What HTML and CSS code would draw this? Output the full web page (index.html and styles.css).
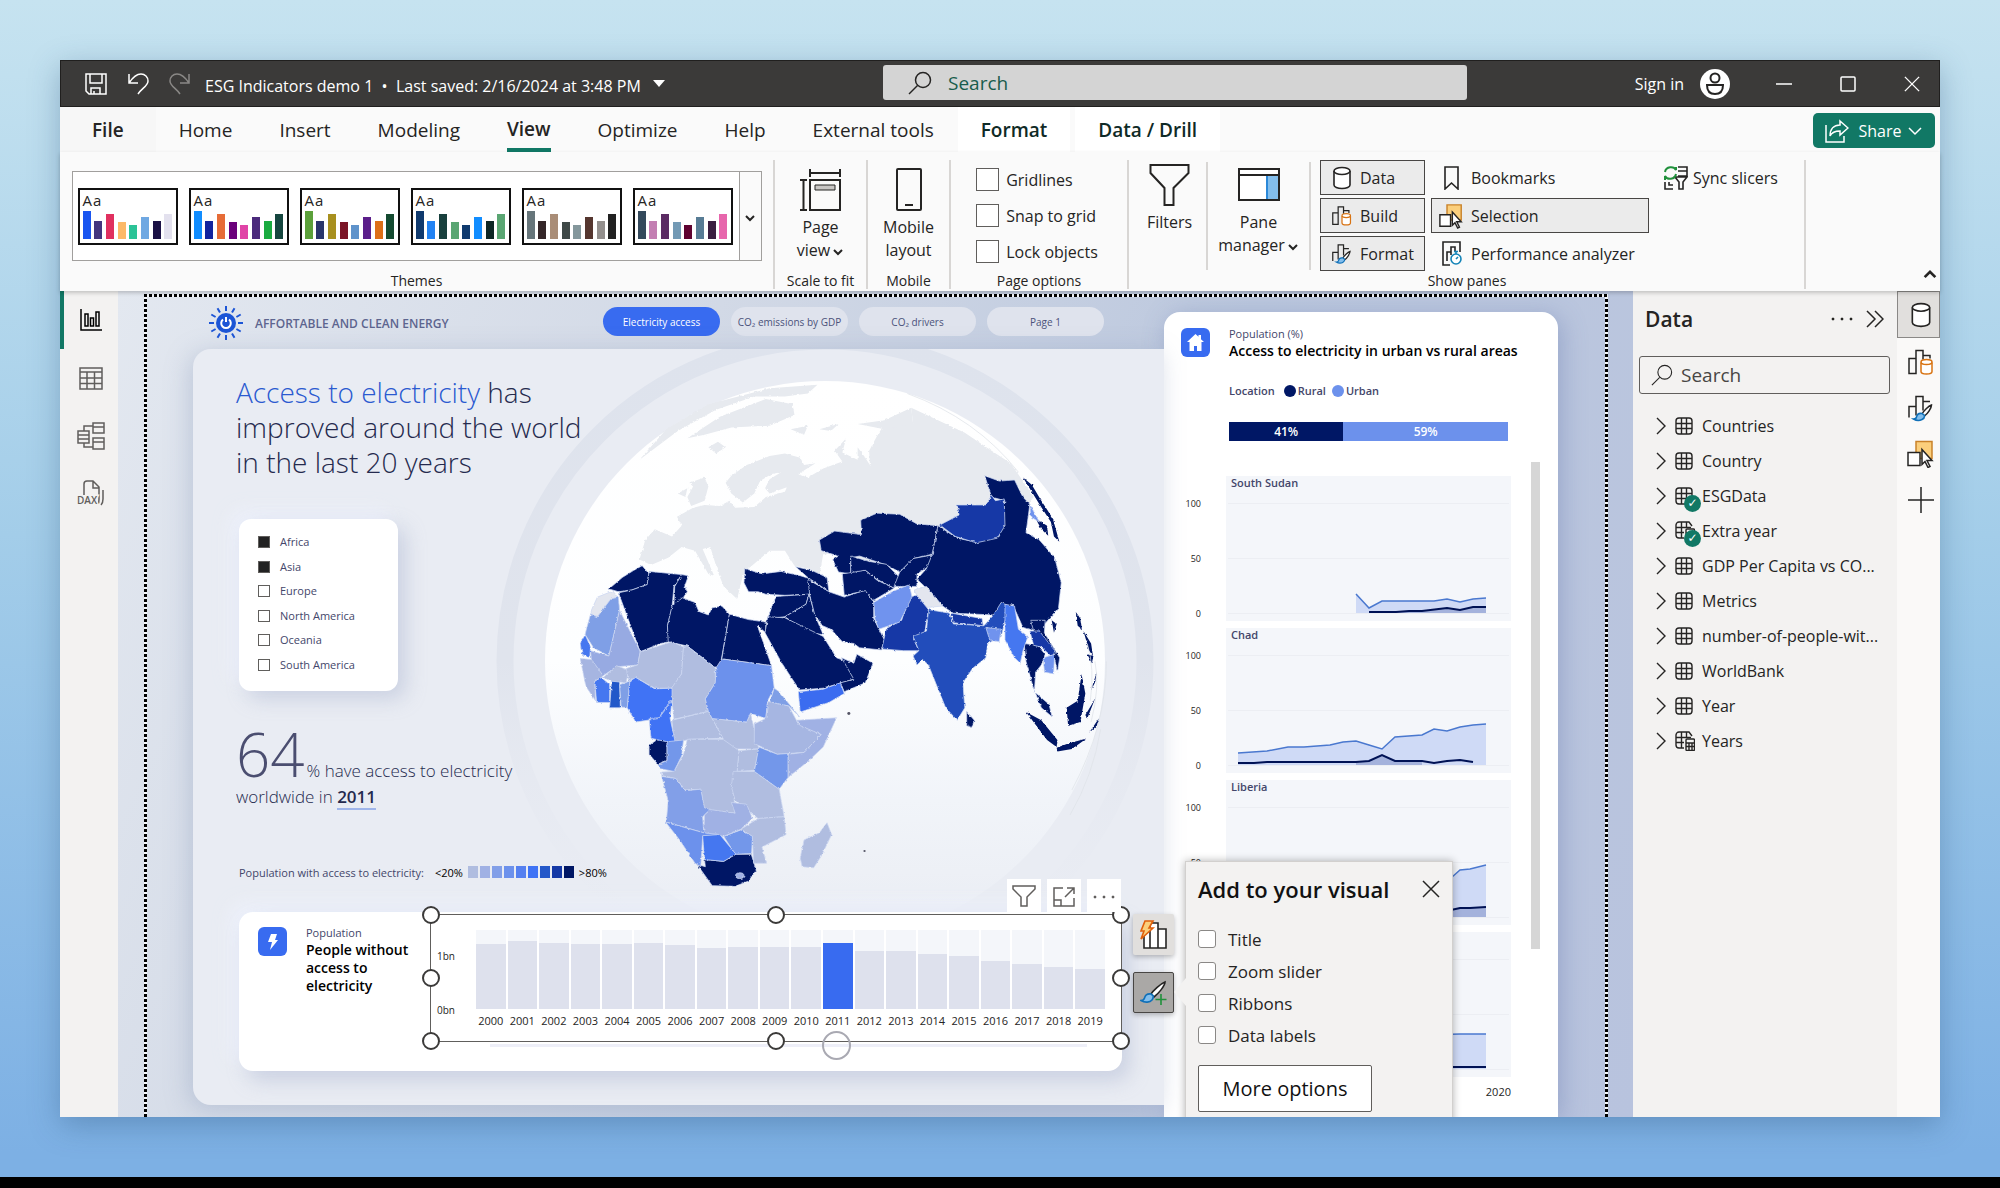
FILE: index.html
```html
<!doctype html>
<html lang="en">
  <head>
    <meta charset="UTF-8" />
    <meta name="viewport" content="width=device-width, initial-scale=1.0" />
    <title>ESG Indicators demo 1</title>
    <link rel="stylesheet" href="styles.css">
  </head>
  <body>
    <!-- Shared icons -->
    <svg class="sprite" aria-hidden="true">
      <symbol id="i-search" viewBox="0 0 24 24"><circle cx="15" cy="9" r="7.5" /><path d="M9.5 14.5 1 23" /></symbol>
      <symbol id="i-cylinder" viewBox="0 0 20 24"><path d="M2 5v14c0 2 3.500 3.500 8 3.500s8-1.500 8-3.500V5" fill="#fff" /><ellipse cx="10" cy="5" rx="8" ry="3.500" fill="#fff" /></symbol>
      <symbol id="i-build" viewBox="0 0 26 26"><path d="M1 9h7v15H1zM8 24V1h7v9M15 6h7v3" /><path class="orange" d="M13 13v9c0 1.300 2 2.500 5.500 2.500S24 23.300 24 22v-9" /><ellipse class="orange" cx="18.500" cy="12.500" rx="5.500" ry="2.500" /></symbol>
      <symbol id="i-format" viewBox="0 0 26 26"><path d="M1 22V11h7M8 20V1h7v14M15 6h7" /><path d="M23.500 9.500c-3 1-8 6-9.500 9l2.500 2c3-2 7-8 7-11z" fill="#fff" /><path class="blue" d="M14 18c-3-.5-5 1-5.500 3.500-.3 1.500-1.500 2-3 2 2.500 1.500 6 1.800 8.500.5 2-1 2.700-2.700 2.500-4z" /></symbol>
      <symbol id="i-selection" viewBox="0 0 27 27"><path d="M9 1h16v17H9z" fill="#fbcf7c" stroke="#c9822a" /><path d="M1 12h12v13H1z" fill="#fff" /><path d="m15 9 10 11h-5l3 6-2 1-3-6-3 3z" fill="#fff" /></symbol>
      <symbol id="i-chevron" viewBox="0 0 12 8"><path d="m2 2 4 4 4-4" /></symbol>
      <symbol id="i-right" viewBox="0 0 10 18"><path d="m1 1 8 8-8 8" /></symbol>
      <symbol id="i-table" viewBox="0 0 18 18"><rect x="1" y="1" width="16" height="16" rx="3" /><path d="M6.500 1v16M11.500 1v16M1 6.500h16M1 11.500h16" /></symbol>
      <symbol id="i-calc" viewBox="0 0 20 20"><path d="M9 17H4a3 3 0 0 1-3-3V4a3 3 0 0 1 3-3h10l3 4M6.500 1v16M11.500 1v6M1 6.500h15M1 11.500h8" /><rect x="11" y="8" width="8.500" height="11.500" rx="1" /><path d="M11 12h8M11 15.500h8M14 12v7M17 12v7" /></symbol>
      <symbol id="i-funnel" viewBox="0 0 40 42"><path d="M1 1h38v8L24 24v17h-9V24L1 9z" /></symbol>
      <symbol id="i-close" viewBox="0 0 18 18"><path d="m1 1 16 16M17 1 1 17" /></symbol>
      <symbol id="i-dots" viewBox="0 0 22 4"><path d="M1 1h2v2H1zM10 1h2v2h-2zM19 1h2v2h-2z" fill="currentColor" stroke-width=".5" /></symbol>
    </svg>

    <div class="app">
      <header class="titlebar">
        <button class="tb-btn" aria-label="Save"><svg width="22" height="22" viewBox="0 0 22 22"><path d="M1 1h20v20H4l-3-3zM5 1v9h12V1M6 21v-6h9v6M9 21v-3" /></svg></button>
        <button class="tb-btn" aria-label="Undo"><svg width="22" height="22" viewBox="0 0 22 22"><path d="M2 1v9h9M2 10C6 4 10 1 14 1c4 0 7 3 7 7 0 5-6 7-10 13" /></svg></button>
        <button class="tb-btn tb-off" aria-label="Redo"><svg width="22" height="22" viewBox="0 0 22 22"><path d="M20 1v9h-9M20 10C16 4 12 1 8 1 4 1 1 4 1 8c0 5 6 7 10 13" /></svg></button>
        <button class="doc-name">ESG Indicators demo 1 &nbsp;•&nbsp; Last saved: 2/16/2024 at 3:48 PM <span class="caret"></span></button>
        <label class="top-search"><svg width="24" height="24"><use href="#i-search" /></svg><input type="text" placeholder="Search" aria-label="Search"></label>
        <div class="account">
          <span>Sign in</span>
          <svg class="avatar" width="30" height="30" viewBox="0 0 30 30"><circle cx="15" cy="15" r="15" fill="#fff" stroke="none" /><circle cx="15" cy="9" r="4.500" /><path d="M7 16h16c0 6-3 9-8 9s-8-3-8-9z" /></svg>
          <button class="win-btn" aria-label="Minimize"><svg width="16" height="16" viewBox="0 0 16 16"><path d="M0 8h16" /></svg></button>
          <button class="win-btn" aria-label="Maximize"><svg width="16" height="16" viewBox="0 0 16 16"><rect x="1" y="1" width="14" height="14" rx="1" /></svg></button>
          <button class="win-btn" aria-label="Close"><svg width="16" height="16"><use href="#i-close" /></svg></button>
        </div>
      </header>

      <nav class="tabs">
        <button class="tab tab-file">File</button>
        <button class="tab">Home</button>
        <button class="tab">Insert</button>
        <button class="tab">Modeling</button>
        <button class="tab tab-active"><span>View</span></button>
        <button class="tab">Optimize</button>
        <button class="tab">Help</button>
        <button class="tab">External tools</button>
        <button class="tab tab-context">Format</button>
        <button class="tab tab-context">Data / Drill</button>
        <button class="share"><svg width="24" height="24" viewBox="0 0 24 24"><path d="M1 6v17h18v-6M15 2l8 7-8 7v-4c-5 0-8 1-10 5 0-7 4-11 10-11z" /></svg>Share<svg width="18" height="12"><use href="#i-chevron" /></svg></button>
      </nav>

      <div class="ribbon">
        <section class="group group-themes">
          <div class="gallery">
            <button class="theme">Aa<span class="swatches"><i style="background:#1a55f0"></i><i style="background:#43357e"></i><i style="background:#e0305f"></i><i style="background:#fcb968"></i><i style="background:#2cc397"></i><i style="background:#6fa8e2"></i><i style="background:#1b1145"></i><i style="background:#e3e1ee"></i></span></button>
            <button class="theme">Aa<span class="swatches"><i style="background:#118dff"></i><i style="background:#12239e"></i><i style="background:#e66c37"></i><i style="background:#6b007b"></i><i style="background:#e044a7"></i><i style="background:#4b2a7c"></i><i style="background:#1aab40"></i><i style="background:#15463f"></i></span></button>
            <button class="theme">Aa<span class="swatches"><i style="background:#5ba03a"></i><i style="background:#29356b"></i><i style="background:#a8901f"></i><i style="background:#7a1426"></i><i style="background:#5f93cb"></i><i style="background:#5b1e8a"></i><i style="background:#dd6f17"></i><i style="background:#144a30"></i></span></button>
            <button class="theme">Aa<span class="swatches"><i style="background:#103a6e"></i><i style="background:#2283f3"></i><i style="background:#18403d"></i><i style="background:#5aa673"></i><i style="background:#103a6e"></i><i style="background:#118dff"></i><i style="background:#0d2625"></i><i style="background:#5aa673"></i></span></button>
            <button class="theme">Aa<span class="swatches"><i style="background:#66757a"></i><i style="background:#342628"></i><i style="background:#a98d77"></i><i style="background:#3f4948"></i><i style="background:#84979c"></i><i style="background:#55362f"></i><i style="background:#938f8d"></i><i style="background:#212121"></i></span></button>
            <button class="theme">Aa<span class="swatches"><i style="background:#33495b"></i><i style="background:#c37fb2"></i><i style="background:#5b2b63"></i><i style="background:#739ab5"></i><i style="background:#5f0230"></i><i style="background:#587c95"></i><i style="background:#3a1e40"></i><i style="background:#e766ac"></i></span></button>
            <button class="gallery-more" aria-label="More themes"><svg width="12" height="8"><use href="#i-chevron" /></svg></button>
          </div>
          <h2 class="group-label">Themes</h2>
        </section>

        <section class="group group-scale">
          <button class="big"><svg width="42" height="43" viewBox="0 0 42 43"><path d="M11 1v8M41 1v8M11 5h30M1 12h7M1 42h7M4.500 12v30" /><path d="M11 12h30v30H11z" /><path d="M16 17h20v5H16z" fill="#c8c6c4" stroke-width="1" /></svg><span>Page<br>view<svg width="12" height="8"><use href="#i-chevron" /></svg></span></button>
          <h2 class="group-label">Scale to fit</h2>
        </section>

        <section class="group group-mobile">
          <button class="big"><svg width="26" height="43" viewBox="0 0 26 43"><rect x="1" y="1" width="24" height="41" rx="1" /><path d="M9 37h8" /></svg><span>Mobile<br>layout</span></button>
          <h2 class="group-label">Mobile</h2>
        </section>

        <section class="group group-options">
          <div class="checks">
            <label><input type="checkbox">Gridlines</label>
            <label><input type="checkbox">Snap to grid</label>
            <label><input type="checkbox">Lock objects</label>
          </div>
          <h2 class="group-label">Page options</h2>
        </section>

        <section class="group group-short group-filters">
          <button class="big"><svg width="41" height="42"><use href="#i-funnel" /></svg><span>Filters</span></button>
        </section>

        <section class="group group-short group-pane">
          <button class="big"><svg width="42" height="42" viewBox="0 0 42 42"><path d="M1 5h40v31H1z" fill="#fff" /><path d="M29 11h12v25H29z" fill="#83beec" stroke="#2b88d8" /><path d="M1 5h40v31H1zM1 11h40" /></svg><span>Pane<br>manager<svg width="12" height="8"><use href="#i-chevron" /></svg></span></button>
        </section>

        <section class="group group-panes">
          <div class="panes">
            <button class="pane-btn pane-on"><svg width="20" height="24"><use href="#i-cylinder" /></svg>Data</button>
            <button class="pane-btn"><svg width="24" height="24" viewBox="0 0 24 24"><path d="M6 1h13v22l-6.500-6L6 23z" /></svg>Bookmarks</button>
            <button class="pane-btn"><svg width="24" height="24" viewBox="0 0 24 24"><path d="M14 1h9v9h-9M14 5h9M1 16v7h8M5 16v3h4M11 11h12l-4 5v7h-4v-7z" /><path class="sync" d="M1 6c1-6 9-6 11-2V1M12 8c-1 6-9 6-11 2v4" /></svg>Sync slicers</button>
            <button class="pane-btn pane-on"><svg width="22" height="24"><use href="#i-build" /></svg>Build</button>
            <button class="pane-btn pane-on"><svg width="24" height="26"><use href="#i-selection" /></svg>Selection</button>
            <span></span>
            <button class="pane-btn pane-on"><svg width="22" height="24"><use href="#i-format" /></svg>Format</button>
            <button class="pane-btn"><svg width="24" height="25" viewBox="0 0 24 25"><path d="M11 24H4V1h17v10M8 20v-9h4M12 14V6h4v5" /><circle class="teal" cx="17" cy="18" r="5" /><path class="teal" d="M15 10.500h4M17 11v2M17 18l2-2" /></svg>Performance analyzer</button>
          </div>
          <h2 class="group-label">Show panes</h2>
        </section>
        <button class="collapse" aria-label="Collapse ribbon"><svg width="16" height="11" viewBox="0 0 12 8"><path d="m2 6 4-4 4 4" /></svg></button>
      </div>

      <div class="workspace">
        <nav class="views">
          <button class="view view-on" aria-label="Report view"><svg width="22" height="22" viewBox="0 0 22 22"><path d="M1 0v21h21M5 5h3v12H5zM10.500 9h3v8h-3zM16 3h3v14h-3z" /></svg></button>
          <button class="view" aria-label="Table view"><svg width="24" height="23" viewBox="0 0 24 23"><path d="M1 1h22v21H1zM1 5h22M1 11h22M1 16.500h22M8 5v17M15.500 5v17" /></svg></button>
          <button class="view" aria-label="Model view"><svg width="28" height="28" viewBox="0 0 28 28"><path d="M1 9h11v12H1zM1 13h11M1 17h11M16 1h11v10H16zM16 5h11M16 16h11v11H16zM16 20h11M7 9V4h9M7 21v4h9" /></svg></button>
          <button class="view" aria-label="DAX query view"><svg width="28" height="28" viewBox="0 0 28 28"><path d="M7 15V4c0-2 1-3 3-3h6l6 6v12c0 3 0 4-1 5M16 1v7h6M26 10v9c0 3 0 4-2 6" /><text x="0" y="24">DAX</text></svg></button>
        </nav>

        <main class="canvas">
          <div class="page">
            <div class="report">
              <div class="report-head">
                <svg class="sun" width="34" height="34" viewBox="-17 -17 34 34"><circle r="10" fill="#1c55d6" stroke="none" /><path d="M0-12v-5M0 12v5M12 0h5M-12 0h-5M6-10.400l2.500-4.300M-6-10.400l-2.500-4.300M6 10.400l2.500 4.300M-6 10.400l-2.500 4.300M10.400-6l4.300-2.500M10.400 6l4.300 2.500M-10.400-6l-4.300-2.500M-10.400 6l-4.300 2.500" /><path d="M-3-3.500a4.800 4.800 0 1 0 6 0M0-6v5" stroke="#fff" /></svg>
                <h1>AFFORTABLE AND CLEAN ENERGY</h1>
                <div class="pills">
                  <button class="pill pill-on">Electricity access</button>
                  <button class="pill">CO₂ emissions by GDP</button>
                  <button class="pill">CO₂ drivers</button>
                  <button class="pill">Page 1</button>
                </div>
              </div>

              <section class="panel">
                <div class="globe">
                  <svg width="971" height="756" viewBox="0 0 971 756">
                    <defs>
                      <linearGradient id="ocean" x1="0" y1="0" x2="0" y2="1"><stop offset="0" stop-color="#fff" /><stop offset=".5" stop-color="#fdfeff" /><stop offset=".75" stop-color="#f1f4f9" /><stop offset="1" stop-color="#e9ecf3" /></linearGradient>
                      <linearGradient id="halo" x1="0" y1="0" x2="0" y2="1"><stop offset="0" stop-color="#dee3ed" /><stop offset=".5" stop-color="#e0e4ed" /><stop offset=".9" stop-color="#e7eaf2" stop-opacity="0" /></linearGradient>
                      <filter id="coast" x="0" y="0" width="1" height="1"><feTurbulence type="fractalNoise" baseFrequency=".12" numOctaves="3" seed="4" /><feDisplacementMap in="SourceGraphic" scale="7" xChannelSelector="R" yChannelSelector="G" /></filter>
                    </defs>
                    <circle cx="632" cy="312" r="320" stroke="url(#halo)" stroke-width="17" />
                    <circle cx="632" cy="312" r="280" fill="url(#ocean)" stroke="none" />
                    <g transform="translate(347 -9) scale(.3827 .3571)">
                      <g fill="#e7eaef" stroke="none" filter="url(#coast)">
                        <path d="M260 615 275 560 300 530 345 550 370 520 358 495 400 470 430 462 470 465 495 450 510 470 560 468 590 440 640 425 645 412 600 430 588 415 600 390 630 370 605 375 575 395 560 430 530 455 500 430 485 400 500 380 540 350 600 325 640 318 680 330 690 350 720 345 675 375 700 385 740 360 790 340 770 310 800 275 790 315 830 335 830 300 850 330 862 350 860 310 880 270 900 235 975 235 970 190 1110 260 1180 310 1230 345 1290 440 1200 560 900 640 780 600 740 600 730 660 700 640 665 632 640 590 600 590 545 640 530 660 515 725 480 690 465 650 445 580 425 585 455 660 440 655 405 590 370 580 335 610 290 630Z" />
                        <path d="M440 300 465 285 485 300 460 318ZM395 465 385 440 400 410 390 400 430 385 440 410 430 450ZM360 430 385 415 380 440ZM385 275 470 215 590 165 660 180 665 210 600 240 500 245 430 265ZM260 335 330 250 440 180 600 135 725 125 700 150 640 158 560 158 460 195 360 255ZM655 250 700 240 690 265ZM730 250 780 235 760 255ZM830 235 900 225 970 190 975 235 900 250Z" />
                      </g>
                      <g class="land" filter="url(#coast)">
                        <g fill="#001765">
                          <path d="M180 697 215 665 245 645 267 632 285 655 280 685 240 700 205 705Z" />
                          <path d="M285 648 370 657 350 690 345 750 333 800 337 845 315 850 262 873 205 708 240 700 280 685Z" />
                          <path d="M370 657 388 660 378 690 385 705 372 725 350 742 352 690Z" />
                          <path d="M372 722 405 735 415 760 440 770 450 750 475 745 495 768 470 918 455 915 385 857 335 845 333 800 345 745Z" />
                          <path d="M495 768 545 783 590 790 590 820 568 800 605 912 475 893Z" />
                          <path d="M535 640 550 645 580 655 630 648 680 660 710 670 705 712 640 715 590 712 570 705 545 705 533 680Z" />
                          <path d="M668 635 710 645 750 665 755 705 735 690 700 665Z" />
                          <path d="M617 718 703 712 695 740 640 775 595 780 608 740Z" />
                          <path d="M640 775 695 740 703 712 720 775 740 825 700 820Z" />
                          <path d="M595 775 640 778 740 830 775 890 822 908 820 950 740 975 678 980 632 905 588 820Z" />
                          <path d="M788 890 820 905 828 880 870 905 850 960 795 985 785 960 820 950Z" />
                          <path d="M700 670 755 705 795 720 850 700 872 735 872 780 900 840 893 868 835 862 820 850 790 845 760 810 738 800 718 770 705 715Z" />
                          <path d="M730 560 770 535 840 545 838 505 880 485 940 488 985 515 1040 520 1025 600 975 612 940 650 905 630 835 605 812 610 812 655 780 650 765 615 780 605 735 590Z" />
                          <path d="M812 655 812 605 860 620 905 628 940 665 925 695 880 670 850 645Z" />
                          <path d="M790 655 850 645 880 672 925 695 870 730 850 702 795 715Z" />
                          <path d="M925 690 940 650 975 612 1025 602 1015 635 985 655 985 690 955 690Z" />
                          <path d="M1040 520 1090 555 1140 566 1200 550 1215 450 1180 440 1162 380 1200 395 1240 392 1262 440 1280 460 1275 500 1270 540 1305 560 1345 610 1362 680 1355 750 1315 800 1285 812 1262 805 1235 740 1185 770 1080 765 1045 740 1005 690 985 670 1010 640 1025 600Z" />
                          <path d="M1265 850 1300 855 1320 880 1310 910 1295 930 1292 985 1330 1020 1338 1055 1310 1030 1288 970 1270 900Z" />
                          <path d="M1282 785 1320 785 1318 820 1358 890 1352 930 1340 870 1290 815Z" />
                          <path d="M1115 1040 1135 1065 1128 1085 1115 1080ZM1410 1468 1410 1468Z" />
                          <path d="M410 1468 432 1475 430 1455 480 1460 510 1440 552 1440 565 1485 545 1515 510 1530 450 1528Z" />
                          <path d="M285 1135 305 1120 332 1122 332 1178 308 1188 285 1160Z" />
                        </g>
                        <g fill="#001765" stroke="none">
                          <path d="M1270 1042 1310 1065 1352 1120 1350 1140 1325 1120ZM1350 1142 1380 1130 1428 1116 1390 1145 1352 1152ZM1415 935 1425 990 1412 1070 1380 1080 1376 1030 1405 1010Z" />
                          <path d="M1400 762 1412 780 1416 810 1405 800ZM1420 815 1440 850 1445 885 1435 870ZM1430 880 1446 885 1442 905ZM1337 785 1350 795 1343 820ZM1262 385 1285 405 1310 450 1340 500 1357 565 1343 550 1335 510 1305 460ZM1295 500 1325 520 1328 548 1310 530Z" />
                          <path d="M1430 1060 1452 1000 1442 1020 1425 1050ZM1440 980 1455 930 1450 960ZM1435 1100 1460 1060 1455 1080Z" />
                        </g>
                        <path fill="#e3e6ef" d="M135 755 150 720 190 703 200 715 160 775 132 770ZM978 700 1010 690 1052 745 1000 750Z" />
                        <path fill="#1539a6" d="M1045 518 1095 490 1090 462 1165 462 1180 435 1190 450 1213 445 1215 520 1195 555 1140 568 1085 550Z" />
                        <path fill="#1539a6" d="M905 808 945 785 965 720 985 715 1015 755 1005 820 975 835 990 870 950 870 893 865Z" />
                        <path fill="#204ebb" d="M1015 755 1070 765 1080 795 1160 800 1185 770 1205 735 1225 745 1205 830 1170 850 1165 890 1130 920 1105 960 1110 1030 1090 1065 1060 1030 1015 910 1000 895 985 910 975 885 990 870 975 830 1010 815Z" />
                        <path fill="#1539a6" d="M1075 765 1155 780 1158 800 1080 792Z" />
                        <path fill="#1539a6" d="M1280 815 1305 815 1345 870 1340 890 1310 860 1290 855Z" />
                        <path fill="#6f93ee" d="M872 735 920 705 965 685 972 720 940 790 885 810 875 780Z" />
                        <path fill="#6f93ee" d="M1165 805 1205 810 1200 845 1175 840ZM1315 890 1345 880 1342 935 1318 930ZM1280 460 1305 510 1282 495Z" />
                        <path fill="#4577f0" d="M1215 740 1240 745 1250 810 1275 830 1262 870 1255 905 1240 890 1215 840Z" />
                        <path fill="#3a6cf0" d="M675 985 740 978 785 960 795 990 755 1015 680 1042Z" />
                        <path fill="#7f9fe6" d="M120 815 132 768 150 775 185 725 205 720 208 757 180 885 140 862 118 825Z" />
                        <path fill="#97aae2" d="M208 757 262 873 255 910 200 915 165 940 135 905 132 870 180 885Z" />
                        <path fill="#4577f0" d="M105 850 118 825 132 860 130 890 110 880ZM143 955 160 945 182 965 182 1015 148 1015Z" />
                        <path fill="#a6b5e1" d="M105 892 135 895 165 940 160 945 143 955 145 1010 120 970Z" />
                        <path fill="#2458c9" d="M187 955 208 955 210 1030 182 1030Z" />
                        <path fill="#7f9fe6" d="M208 965 235 955 228 1030 212 1028Z" />
                        <g fill="#b0bde0">
                          <path d="M165 945 200 912 232 925 225 960 185 955Z" />
                          <path d="M262 873 345 845 375 860 370 935 345 975 300 975 250 945 232 955 225 920 255 910Z" />
                          <path d="M375 857 385 857 458 918 458 960 432 1005 440 1040 350 1062 345 1010 340 980 370 935Z" />
                          <path d="M345 1065 440 1040 478 1115 390 1118 350 1130Z" />
                          <path d="M450 1060 540 1070 550 1045 572 1145 490 1145 478 1115Z" />
                          <path d="M520 1150 572 1145 560 1205 515 1208Z" />
                          <path d="M385 1118 478 1118 520 1150 515 1208 505 1250 510 1325 430 1315 420 1258 380 1260 355 1228 318 1220 318 1210 350 1208 375 1160Z" />
                          <path d="M505 1208 560 1208 625 1258 632 1300 638 1335 570 1340 510 1290 500 1250Z" />
                          <path d="M570 1340 638 1335 643 1385 580 1420 592 1465 558 1465 555 1390 525 1370Z" />
                          <path d="M750 1352 762 1385 735 1445 715 1478 685 1475 680 1450 690 1400 730 1380Z" />
                        </g>
                        <path fill="#3f73f5" d="M235 955 250 945 300 977 345 975 345 1010 310 1060 250 1070 228 1030ZM345 1005 340 1060 352 1120 350 1130 290 1115 285 1060 310 1058Z" />
                        <path fill="#6c91ec" d="M475 893 605 912 612 975 595 1010 590 1060 550 1045 540 1070 450 1060 440 1040 432 1005 458 960 460 918Z" />
                        <path fill="#7f9fe6" d="M612 975 625 985 678 1055 650 1025 600 1015Z" />
                        <path fill="#a6b6e2" d="M595 1012 650 1025 675 1075 735 1105 690 1155 620 1160 560 1130 560 1075 590 1060Z" />
                        <path fill="#a0b1e4" d="M670 1065 775 1058 740 1140 700 1180 648 1225 648 1160 690 1155 735 1105 680 1080Z" />
                        <path fill="#7397ea" d="M572 1140 620 1160 648 1158 648 1225 625 1258 560 1208ZM332 1125 375 1120 370 1165 350 1208 312 1200 308 1188 332 1178ZM480 1390 525 1372 555 1390 553 1438 510 1440Z" />
                        <path fill="#829fe8" d="M318 1222 355 1228 380 1262 420 1258 430 1310 445 1315 425 1335 428 1380 330 1350 335 1290Z" />
                        <path fill="#a0b1e4" d="M430 1330 445 1315 510 1325 500 1295 540 1300 555 1340 525 1370 480 1390 428 1380Z" />
                        <path fill="#6c91ec" d="M328 1350 428 1380 470 1385 425 1390 420 1475 405 1465 365 1400Z" />
                        <path fill="#4577f0" d="M425 1388 470 1385 512 1440 480 1460 430 1455Z" />
                        <ellipse cx="522" cy="1500" rx="11" ry="8" fill="#a0b1e4" />
                      </g>
                      <path d="M1385 1330q60-110 80-240M1430 850q20 70 8 160M1450 900q14 70-10 170M1480 900q0 180-90 360M960 150q180 70 290 220" class="wisp" />
                      <g fill="#556" stroke="none"><circle cx="807" cy="1046" r="4" /><circle cx="848" cy="1431" r="3" /></g>
                    </g>
                  </svg>
                </div>

                <h2 class="headline"><em>Access to electricity</em> has<br>improved around the world<br>in the last 20 years</h2>

                <div class="slicer">
                  <label><input type="checkbox" checked>Africa</label>
                  <label><input type="checkbox" checked>Asia</label>
                  <label><input type="checkbox">Europe</label>
                  <label><input type="checkbox">North America</label>
                  <label><input type="checkbox">Oceania</label>
                  <label><input type="checkbox">South America</label>
                </div>

                <p class="stat"><b>64</b>% have access to electricity<br>worldwide in <u>2011</u></p>

                <div class="scale">
                  <span>Population with access to electricity:</span>
                  <strong>&lt;20%</strong>
                  <span class="ramp"><i style="background:#b0bde0"></i><i style="background:#a0b1e4"></i><i style="background:#829fe8"></i><i style="background:#6c91ec"></i><i style="background:#5580f0"></i><i style="background:#3f73f5"></i><i style="background:#2458c9"></i><i style="background:#1539a6"></i><i style="background:#001765"></i></span>
                  <strong>&gt;80%</strong>
                </div>

                <div class="card-bottom">
                  <svg class="badge" width="29" height="29" viewBox="0 0 29 29"><path d="M13 7h6l-2 6h3l-8 10 2-8h-4z" /></svg>
                  <div class="card-text">
                    <small>Population</small>
                    <h3>People without<br>access to<br>electricity</h3>
                  </div>

                  <div class="visual">
                    <div class="y-axis"><span>1bn</span><span>0bn</span></div>
                    <div class="bars">
                      <div class="col"><div><i style="height:82%"></i></div>2000</div>
                      <div class="col"><div><i style="height:86%"></i></div>2001</div>
                      <div class="col"><div><i style="height:84%"></i></div>2002</div>
                      <div class="col"><div><i style="height:82%"></i></div>2003</div>
                      <div class="col"><div><i style="height:82%"></i></div>2004</div>
                      <div class="col"><div><i style="height:84%"></i></div>2005</div>
                      <div class="col"><div><i style="height:81%"></i></div>2006</div>
                      <div class="col"><div><i style="height:77%"></i></div>2007</div>
                      <div class="col"><div><i style="height:79%"></i></div>2008</div>
                      <div class="col"><div><i style="height:79%"></i></div>2009</div>
                      <div class="col"><div><i style="height:78%"></i></div>2010</div>
                      <div class="col col-on"><div><i style="height:84%"></i></div>2011</div>
                      <div class="col"><div><i style="height:73%"></i></div>2012</div>
                      <div class="col"><div><i style="height:73%"></i></div>2013</div>
                      <div class="col"><div><i style="height:70%"></i></div>2014</div>
                      <div class="col"><div><i style="height:67%"></i></div>2015</div>
                      <div class="col"><div><i style="height:61%"></i></div>2016</div>
                      <div class="col"><div><i style="height:57%"></i></div>2017</div>
                      <div class="col"><div><i style="height:53%"></i></div>2018</div>
                      <div class="col"><div><i style="height:51%"></i></div>2019</div>
                    </div>
                    <input class="year-slider" type="range" min="2000" max="2019" step="any" value="2011.1" aria-label="Year">
                    <!-- resize handles -->
                    <span class="handle h-tl"></span><span class="handle h-t"></span><span class="handle h-tr"></span>
                    <span class="handle h-l"></span><span class="handle h-r"></span>
                    <span class="handle h-bl"></span><span class="handle h-b"></span><span class="handle h-br"></span>

                    <div class="visual-tools">
                      <button aria-label="Filter"><svg width="24" height="22" viewBox="0 0 24 22"><path d="M1 1h22v3l-8 8v9h-6v-9L1 4z" /></svg></button>
                      <button aria-label="Focus mode"><svg width="22" height="20" viewBox="0 0 22 20"><path d="M10 1H1v18h20v-8M1 13h7v6M14 1h7v6M21 1l-9 9" /></svg></button>
                      <button aria-label="More"><svg width="22" height="4"><use href="#i-dots" /></svg></button>
                    </div>
                    <div class="side-tools">
                      <button aria-label="Suggest a visual"><svg width="28" height="30" viewBox="0 0 28 30"><path d="M4 10h6v18H4zM10 3h8v25h-8zM18 9h8v19h-8z" fill="#fff" /><path d="M5 1h8l-4 7h4L1 19l3-8H1z" fill="#fbcf7c" stroke="#e0600c" /></svg></button>
                      <button class="side-on" aria-label="Add to your visual"><svg width="28" height="26" viewBox="0 0 28 26"><path d="M25 2C20 4 13 11 11 14l3 3C18 14 25 6 25 2z" fill="#fff" /><path class="blue" d="M11 14c-4-.5-6 2-6.500 4-.5 2-2 2.500-3.500 2.500 4 2.500 9 2 11-.5 1.200-1.500 1.500-3 1-4.500z" /><path class="green" d="M21 14v11M15.500 19.500h11" /></svg></button>
                    </div>

                    <div class="flyout">
                      <header><h2>Add to your visual</h2><button aria-label="Close"><svg width="18" height="18"><use href="#i-close" /></svg></button></header>
                      <label><input type="checkbox">Title</label>
                      <label><input type="checkbox">Zoom slider</label>
                      <label><input type="checkbox">Ribbons</label>
                      <label><input type="checkbox">Data labels</label>
                      <button class="more">More options</button>
                    </div>
                  </div>
                </div>
              </section>
            </div>

            <section class="urban">
              <div class="urban-head">
                <svg class="badge" width="29" height="29" viewBox="0 0 29 29"><path d="M14.500 6 6 14h2.500v9H13v-5h3v5h4.500v-9H23l-3-2.800V7h-2.500v1.800z" /></svg>
                <div><small>Population (%)</small><h3>Access to electricity in urban vs rural areas</h3></div>
              </div>
              <div class="legend">Location <i class="dot rural"></i>Rural<i class="dot city"></i>Urban</div>
              <div class="split"><span class="rural" style="width:41%">41%</span><span class="city" style="width:59%">59%</span></div>
              <div class="multiples">
                <div class="charts">
                  <svg width="347" height="145" viewBox="0 0 347 145"><rect x="62" width="285" height="145" /><path class="grid" d="M64 27.500h281M64 82.500h281M64 137.500h281" /><text class="name" x="67" y="11">South Sudan</text><text x="37" y="31">100</text><text x="37" y="86">50</text><text x="37" y="141">0</text>
                    <path class="area" d="M192 137V118l13 14 13-7h52l13-2 13 3 13-3 13-1v15z" /><path class="area2" d="M205 137v-1h27l13-1h13l25-3 13 2 13-3h13v6z" /><path class="urban-line" d="m192 118 13 14 13-7h52l13-2 13 3 13-3 13-1" /><path class="rural-line" d="M205 136h27l13-1h13l25-3 13 2 13-3h13" /></svg>
                  <svg width="347" height="145" viewBox="0 0 347 145"><rect x="62" width="285" height="145" /><path class="grid" d="M64 27.500h281M64 82.500h281M64 137.500h281" /><text class="name" x="67" y="11">Chad</text><text x="37" y="31">100</text><text x="37" y="86">50</text><text x="37" y="141">0</text>
                    <path class="area" d="M74 137V125L103 123 124 119H140L166 117 179 114 192 113 205 117 218 121 231 109 258 107 270 101 283 103 296 99 309 97 322 96V137Z" /><path class="area2" d="M192 134 205 133 218 127 231 133 258 133V137H192Z" /><path class="urban-line" d="M74 125 103 123 124 119H140L166 117 179 114 192 113 205 117 218 121 231 109 258 107 270 101 283 103 296 99 309 97 322 96" /><path class="rural-line" d="M74 135H90L103 134H192L205 133 218 127 231 133H258L270 135 283 133 296 132 309 134" /></svg>
                  <svg width="347" height="145" viewBox="0 0 347 145"><rect x="62" width="285" height="145" /><path class="grid" d="M64 27.500h281M64 82.500h281M64 137.500h281" /><text class="name" x="67" y="11">Liberia</text><text x="37" y="31">100</text><text x="37" y="86">50</text><text x="37" y="141">0</text>
                    <path class="area" d="M260 137V112L287 98 296 90 306 89 322 85V137Z" /><path class="area2" d="M260 137V132L287 130 296 128H306L322 127V137Z" /><path class="urban-line" d="M260 112 287 98 296 90 306 89 322 85" /><path class="rural-line" d="M260 132 287 130 296 128H306L322 127" /></svg>
                  <svg width="347" height="145" viewBox="0 0 347 145"><rect x="62" width="285" height="145" /><path class="grid" d="M64 27.500h281M64 82.500h281M64 137.500h281" />
                    <path class="area" d="M260 137V102H322V137Z" /><path class="urban-line" d="M260 103 296 102H322" /><path class="rural-line" d="M260 135H322" /></svg>
                  <div class="x-end">2020</div>
                </div>
                <div class="scrollbar"></div>
              </div>
            </section>
          </div>
        </main>

        <aside class="data-pane">
          <header><h2>Data</h2><svg width="22" height="4"><use href="#i-dots" /></svg><svg width="18" height="18" viewBox="0 0 18 18"><path d="m1 1 8 8-8 8M9 1l8 8-8 8" /></svg></header>
          <label class="pane-search"><svg width="22" height="22"><use href="#i-search" /></svg><input type="text" placeholder="Search" aria-label="Search fields"></label>
          <ul class="tables">
            <li><svg width="10" height="18"><use href="#i-right" /></svg><svg width="18" height="18"><use href="#i-table" /></svg><span>Countries</span></li>
            <li><svg width="10" height="18"><use href="#i-right" /></svg><svg width="18" height="18"><use href="#i-table" /></svg><span>Country</span></li>
            <li class="used"><svg width="10" height="18"><use href="#i-right" /></svg><svg width="18" height="18"><use href="#i-table" /></svg><span>ESGData</span></li>
            <li class="used"><svg width="10" height="18"><use href="#i-right" /></svg><svg width="20" height="20"><use href="#i-calc" /></svg><span>Extra year</span></li>
            <li><svg width="10" height="18"><use href="#i-right" /></svg><svg width="18" height="18"><use href="#i-table" /></svg><span>GDP Per Capita vs CO...</span></li>
            <li><svg width="10" height="18"><use href="#i-right" /></svg><svg width="18" height="18"><use href="#i-table" /></svg><span>Metrics</span></li>
            <li><svg width="10" height="18"><use href="#i-right" /></svg><svg width="18" height="18"><use href="#i-table" /></svg><span>number-of-people-wit...</span></li>
            <li><svg width="10" height="18"><use href="#i-right" /></svg><svg width="18" height="18"><use href="#i-table" /></svg><span>WorldBank</span></li>
            <li><svg width="10" height="18"><use href="#i-right" /></svg><svg width="18" height="18"><use href="#i-table" /></svg><span>Year</span></li>
            <li><svg width="10" height="18"><use href="#i-right" /></svg><svg width="20" height="20"><use href="#i-calc" /></svg><span>Years</span></li>
          </ul>
        </aside>

        <nav class="pane-rail">
          <button class="rail-on" aria-label="Data"><svg width="22" height="26"><use href="#i-cylinder" /></svg></button>
          <button aria-label="Build"><svg width="26" height="27"><use href="#i-build" /></svg></button>
          <button aria-label="Format"><svg width="26" height="27"><use href="#i-format" /></svg></button>
          <button aria-label="Selection"><svg width="27" height="28"><use href="#i-selection" /></svg></button>
          <button aria-label="Add pane"><svg width="26" height="26" viewBox="0 0 26 26"><path d="M13 0v26M0 13h26" /></svg></button>
        </nav>
      </div>
    </div>
    <div class="strip"></div>
  </body>
</html>
```

FILE: styles.css
```css
* {
  box-sizing: border-box;
}
body {
  margin: 0;
  height: 100vh;
  display: flex;
  flex-direction: column;
  overflow: hidden;
  background: linear-gradient(#c6e3f0 0%, #a3cde9 45%, #7db0e4 97%);
  font-family: "Open Sans", "Noto Sans", sans-serif;
  font-size: 16px;
  color: #252423;
}
h1, h2, h3, p, ul {
  margin: 0;
  padding: 0;
  font-weight: 400;
}
button, input {
  font: inherit;
  color: inherit;
  border: 0;
  margin: 0;
  padding: 0;
  background: none;
}
svg {
  fill: none;
  stroke: currentColor;
  stroke-width: 2;
  flex: none;
}
.sprite {
  position: absolute;
  width: 0;
  height: 0;
}
.orange { stroke: #d87312; fill: #fff; }
.blue { stroke: #1070b8; fill: #83beec; }
.green { stroke: #20903b; }
.sync { stroke: #20903b; stroke-width: 2px; }
.teal { stroke: #1484b8; fill: #fff; }

.app {
  flex: 1;
  min-height: 0;
  margin: 60px;
  display: flex;
  flex-direction: column;
  background: #fafafa;
  box-shadow: 0 8px 28px rgba(40, 80, 120, 0.35);
}
.strip {
  height: 11px;
  background: #000;
}

/* Title bar */
.titlebar {
  height: 47px;
  flex: none;
  display: flex;
  align-items: center;
  background: #3b3a39;
  border: 1px solid #201f1e;
  color: #fff;
  padding-left: 24px;
}
.titlebar svg {
  display: block;
  stroke-width: 1.500px;
}
.tb-btn {
  margin-right: 20px;
}
.tb-off {
  color: #8a8886;
  margin-right: 14px;
}
.doc-name {
  white-space: nowrap;
  padding-top: 5px;
}
.caret {
  display: inline-block;
  margin-left: 8px;
  vertical-align: 5px;
  border: 6px solid transparent;
  border-top: 7px solid #fff;
  border-bottom: 0;
}
.top-search {
  position: absolute;
  left: 50%;
  width: 584px;
  height: 35px;
  margin: -2px 0 0 -117px;
  display: flex;
  align-items: center;
  gap: 16px;
  padding-left: 25px;
  background: #d4d4d4;
  border-radius: 3px;
  color: #252423;
}
.top-search input {
  flex: 1;
  font-size: 19px;
}
.top-search input::placeholder {
  color: #185c4c;
  opacity: 1;
}
.account {
  margin-left: auto;
  display: flex;
  align-items: center;
  padding-right: 19px;
}
.avatar {
  margin: 0 46px 0 16px;
  color: #252423;
}
.titlebar .avatar {
  stroke-width: 2px;
}
.win-btn + .win-btn {
  margin-left: 48px;
}

/* Tabs */
.tabs {
  height: 45px;
  flex: none;
  display: flex;
  font-size: 19px;
}
.tab {
  padding: 0 24px 0 23px;
}
.tab-file {
  padding: 0 32px;
  background: #f7f7f7;
  font-weight: 600;
}
.tab-active {
  font-weight: 600;
}
.tab-active span {
  display: block;
  line-height: 45px;
  border-bottom: 4px solid #117865;
  height: 45px;
}
.tab-context {
  padding: 0 23px;
  background: #fff;
  font-weight: 600;
  color: #0f2a26;
  margin-right: 5px;
}
.share {
  margin: 6px 5px 4px auto;
  width: 122px;
  display: flex;
  align-items: center;
  justify-content: center;
  gap: 10px;
  background: #117865;
  border-radius: 5px;
  color: #fff;
  font-size: 16px;
}
.share svg {
  stroke-width: 1.500px;
}
.share svg:last-child {
  margin-left: -6px;
  stroke-width: 1px;
}

/* Ribbon */
.ribbon {
  height: 139px;
  flex: none;
  display: flex;
  padding: 8px 0 2px;
  position: relative;
  z-index: 2;
  box-shadow: 0 2px 4px rgba(0, 0, 0, 0.2);
}
.group {
  display: flex;
  flex-direction: column;
  align-items: center;
  justify-content: space-between;
  border-right: 2px solid #d8d6d4;
}
.group-label {
  font-size: 14px;
  line-height: 16px;
}
.group-themes { width: 715px; }
.group-scale { width: 93px; }
.group-mobile { width: 83px; }
.group-options { width: 178px; }
.group-filters { width: 79px; }
.group-pane { width: 103px; }
.group-panes { width: 495px; }
.group-short {
  margin: 2px 0 19px;
}
.gallery {
  width: 690px;
  height: 90px;
  margin-top: 11px;
  display: flex;
  align-items: center;
  gap: 11px;
  padding-left: 5px;
  background: #fff;
  border: 1px solid #a19f9d;
}
.theme {
  width: 100px;
  height: 57px;
  flex: none;
  padding: 1px 3px 4px;
  border: 2px solid #111;
  background: #fff;
  font-size: 15px;
  line-height: 18px;
  letter-spacing: 1px;
  text-align: left;
  display: flex;
  flex-direction: column;
  justify-content: space-between;
}
.swatches {
  display: flex;
  align-items: flex-end;
  justify-content: space-between;
  height: 28px;
}
.swatches i {
  width: 8px;
  height: 18px;
}
.swatches i:nth-child(1) { height: 28px; }
.swatches i:nth-child(3), .swatches i:nth-child(8) { height: 25px; }
.swatches i:nth-child(4) { height: 17px; }
.swatches i:nth-child(5) { height: 14px; }
.swatches i:nth-child(6) { height: 22px; }
.gallery-more {
  align-self: stretch;
  flex: 1;
  margin-left: -5px;
  border-left: 1px solid #a19f9d;
  background: #fafafa;
}
.big {
  padding-top: 8px;
  line-height: 23px;
}
.big > svg {
  display: block;
  margin: 0 auto 5px;
}
.big span svg {
  margin-left: 2px;
}
.group-short .big {
  padding-top: 2px;
}
.group-filters .big {
  margin-left: 4px;
}
.checks {
  display: flex;
  flex-direction: column;
  gap: 13px;
  padding-top: 8px;
  margin-left: -4px;
}
.checks label {
  display: flex;
  align-items: center;
  gap: 7px;
  height: 23px;
}
input[type="checkbox"] {
  appearance: none;
  width: 23px;
  height: 23px;
  flex: none;
  background: #fff;
  border: 1px solid #605e5c;
}
.panes {
  width: 475px;
  display: grid;
  grid-template-columns: 105px 218px 1fr;
  grid-auto-rows: 35px;
  gap: 3px 6px;
}
.pane-btn {
  display: flex;
  align-items: center;
  gap: 8px;
  padding-left: 11px;
  border: 1px solid transparent;
  white-space: nowrap;
}
.pane-btn svg {
  stroke-width: 1.600px;
}
.pane-btn:nth-child(3n+1) svg {
  width: 20px;
}
.pane-btn:nth-child(3n+2) {
  padding-left: 7px;
}
.pane-btn:nth-child(3) {
  padding-left: 8px;
  gap: 5px;
}
.pane-on {
  background: #ebebeb;
  border-color: #484644;
}
.group-panes .group-label {
  margin-right: 181px;
}
.collapse {
  margin: auto 2px 4px auto;
}

/* Work area */
.workspace {
  flex: 1;
  min-height: 0;
  display: flex;
}
.views {
  width: 58px;
  display: flex;
  flex-direction: column;
  background: #f3f2f1;
}
.view {
  height: 58px;
  border-left: 4px solid transparent;
  color: #605e5c;
}
.view svg {
  display: block;
  margin: 0 auto;
  stroke-width: 1.500px;
}
.view text {
  fill: #605e5c;
  stroke: #f3f2f1;
  stroke-width: 3px;
  paint-order: stroke;
  font-size: 10px;
  font-weight: 600;
}
.view-on {
  border-left-color: #117865;
  color: #000;
}
.canvas {
  flex: 1;
  min-width: 0;
  overflow: hidden;
  padding: 3px 25px 0 26px;
  background: linear-gradient(115deg, #e3e8f0 0%, #d2d9e6 32%, #bcc8de 60%, #b8c3de 100%);
}
.page {
  height: 100%;
  display: flex;
  padding-right: 50px;
  background:
    repeating-linear-gradient(90deg, #000 0 3px, #f3f5f9 3px 5px) top / 100% 3px no-repeat,
    repeating-linear-gradient(#000 0 3px, #f3f5f9 3px 5px) left / 3px 100% no-repeat,
    repeating-linear-gradient(#000 0 3px, #f3f5f9 3px 5px) right / 3px 100% no-repeat;
}
.report {
  flex: 1;
  padding-left: 49px;
}
.report-head {
  height: 55px;
  display: flex;
  align-items: center;
  padding: 0 60px 0 16px;
}
.sun {
  stroke: #1c55d6;
  margin-top: 3px;
}
.report-head h1 {
  margin: 4px 0 0 12px;
  font-size: 12px;
  font-weight: 600;
  color: #5d658f;
  white-space: nowrap;
}
.pills {
  margin-left: auto;
  display: flex;
  gap: 11px;
}
.pill {
  width: 117px;
  height: 29px;
  border-radius: 15px;
  background: #dfe3ed;
  color: #4b527a;
  font-size: 10px;
  white-space: nowrap;
}
.pill-on {
  background: #386bf0;
  color: #fff;
}
.panel {
  position: relative;
  height: 756px;
  padding: 26px 42px 0 46px;
  display: flex;
  flex-direction: column;
  background: #e9ecf3;
  border-radius: 18px 0 0 18px;
  box-shadow: -4px 4px 24px rgba(130, 145, 180, 0.35);
}
.panel > * {
  position: relative;
}
.panel > .globe {
  position: absolute;
  inset: 0;
  overflow: hidden;
}
.land {
  stroke: #ccd6f2;
  stroke-width: 2px;
}
.globe svg {
  display: block;
}
.wisp {
  stroke: #dfe2e8;
}
.headline {
  margin-left: -3px;
  font-size: 28px;
  line-height: 35px;
  font-weight: 300;
  color: #252a4e;
}
.headline em {
  font-style: normal;
  color: #2b5ad0;
}
.slicer {
  width: 159px;
  height: 172px;
  margin-top: 39px;
  padding: 16px 19px 19px;
  display: flex;
  flex-direction: column;
  justify-content: space-between;
  background: #fff;
  border-radius: 12px;
  box-shadow: 8px 8px 20px rgba(150, 160, 195, 0.35), -8px -8px 18px rgba(240, 243, 255, 0.7);
  font-size: 11px;
  line-height: 14px;
  color: #43466a;
}
.slicer label {
  display: flex;
  align-items: center;
  gap: 10px;
}
.slicer input[type="checkbox"] {
  width: 12px;
  height: 12px;
}
.slicer input[type="checkbox"]:checked {
  background: #222;
}
.stat {
  margin-top: 33px;
  margin-left: -3px;
  font-size: 17px;
  line-height: 26px;
  font-weight: 300;
  color: #252a4e;
}
.stat b {
  font-size: 60px;
  line-height: 60px;
  font-weight: 300;
  color: #4b4e70;
  margin-right: 2px;
}
.stat u {
  font-weight: 600;
  text-decoration: none;
  border-bottom: 2px solid #9fb5ea;
}
.scale {
  margin-top: 54px;
  display: flex;
  align-items: center;
  gap: 5px;
  height: 16px;
  font-size: 11px;
  color: #43466a;
}
.scale strong {
  font-weight: 400;
  color: #000;
}
.scale span:first-child {
  margin-right: 6px;
}
.ramp {
  display: flex;
  gap: 2px;
}
.ramp i {
  width: 10px;
  height: 12px;
}
.card-bottom {
  height: 159px;
  margin-top: 32px;
  padding: 2px 0 0 19px;
  display: flex;
  background: #fff;
  border-radius: 14px;
  box-shadow: 8px 10px 20px rgba(150, 160, 195, 0.35), -8px -8px 18px rgba(240, 243, 255, 0.7);
}
.badge {
  margin-top: 13px;
  background: #386bf0;
  border-radius: 6px;
  fill: #fff;
  stroke: none;
}
.card-text {
  margin: 11px 0 0 19px;
}
small {
  display: block;
  font-size: 11px;
  line-height: 16px;
  color: #43466a;
}
h3 {
  font-size: 14px;
  line-height: 18px;
  font-weight: 600;
  color: #000;
  white-space: nowrap;
}
.visual {
  position: relative;
  z-index: 3;
  width: 692px;
  height: 128px;
  margin-left: auto;
  display: flex;
  padding: 15px 16px 0 6px;
  border: 1px solid #605e5c;
}
.y-axis {
  width: 39px;
  height: 88px;
  display: flex;
  flex-direction: column;
  justify-content: space-between;
  padding-top: 18px;
  font-size: 10px;
  line-height: 16px;
}
.bars {
  flex: 1;
  display: flex;
  gap: 2px;
}
.col {
  flex: 1;
  text-align: center;
  font-size: 11px;
  line-height: 24px;
}
.col div {
  height: 79px;
  display: flex;
  align-items: flex-end;
  background: #f4f6fa;
}
.col i {
  width: 100%;
  background: #dee1ed;
}
.col-on i {
  background: #386bf0;
}
.year-slider {
  appearance: none;
  position: absolute;
  left: 59px;
  bottom: -19px;
  width: 597px;
  height: 29px;
}
.year-slider::-webkit-slider-runnable-track {
  height: 3px;
  background: #eeeff8;
}
.year-slider::-webkit-slider-thumb {
  appearance: none;
  width: 29px;
  height: 29px;
  margin-top: -13px;
  border: 2px solid #a9a9b2;
  border-radius: 50%;
}
.handle {
  position: absolute;
  width: 18px;
  height: 18px;
  margin: -9px;
  background: #fff;
  border: 2px solid #3b3a39;
  border-radius: 50%;
}
.h-tl, .h-t, .h-tr { top: 0; }
.h-l, .h-r { top: 50%; }
.h-bl, .h-b, .h-br { top: 100%; }
.h-tl, .h-l, .h-bl { left: 0; }
.h-t, .h-b { left: 50%; }
.h-tr, .h-r, .h-br { left: 100%; }
.visual-tools {
  position: absolute;
  right: 0;
  bottom: 100%;
  display: flex;
  gap: 6px;
  margin-bottom: 3px;
  color: #605e5c;
}
.visual-tools button {
  width: 34px;
  height: 33px;
  background: #fff;
}
.visual-tools svg {
  stroke-width: 1.500px;
  vertical-align: middle;
}
.side-tools {
  position: absolute;
  top: -1px;
  left: 100%;
  margin-left: 12px;
  display: grid;
  gap: 17px;
}
.side-tools button {
  width: 41px;
  height: 41px;
  display: grid;
  place-items: center;
  background: #e1dfdd;
  border-radius: 2px;
  box-shadow: 0 2px 5px rgba(0, 0, 0, 0.25);
}
.side-tools .side-on {
  background: #aaa8a6;
  border: 1px solid #484644;
}
.side-tools svg {
  stroke-width: 1.600px;
}
.flyout {
  position: absolute;
  top: -54px;
  left: 100%;
  margin-left: 64px;
  width: 268px;
  height: 280px;
  padding: 12px;
  display: flex;
  flex-direction: column;
  background: #f3f2f1;
  border: 1px solid #d2d0ce;
  box-shadow: 0 0 8px rgba(0, 0, 0, 0.3);
  font-size: 17px;
}
.flyout::before {
  content: "";
  position: absolute;
  left: -12px;
  top: 116px;
  border: 14px solid transparent;
  border-left: 0;
  border-right: 12px solid #f3f2f1;
}
.flyout header {
  display: flex;
  justify-content: space-between;
  align-items: center;
  height: 30px;
  margin-bottom: 19px;
  white-space: nowrap;
}
.flyout h2 {
  font-size: 22px;
  font-weight: 600;
  color: #111;
}
.flyout header svg {
  stroke-width: 1.500px;
  display: block;
}
.flyout label {
  display: flex;
  align-items: center;
  gap: 12px;
  height: 32px;
}
.flyout input[type="checkbox"] {
  width: 18px;
  height: 18px;
  border-color: #8a8886;
  border-radius: 3px;
}
.flyout .more {
  width: 174px;
  height: 47px;
  margin-top: 14px;
  background: #fff;
  border: 1px solid #605e5c;
  border-radius: 2px;
  font-size: 20px;
  font-weight: 500;
  color: #111;
}

/* Urban vs rural card */
.urban {
  width: 394px;
  margin-top: 18px;
  padding-top: 14px;
  background: #fff;
  border-radius: 16px 16px 0 0;
  box-shadow: 4px 4px 24px rgba(90, 110, 165, 0.35);
}
.urban-head {
  display: flex;
  gap: 19px;
  padding-left: 17px;
}
.urban-head .badge {
  margin-top: 2px;
}
.legend {
  margin: 23px 0 0 65px;
  display: flex;
  align-items: center;
  font-size: 11px;
  line-height: 16px;
  font-weight: 600;
  color: #43466a;
}
.dot {
  width: 12px;
  height: 12px;
  margin: 0 2px 0 6px;
  border-radius: 50%;
}
.dot.rural {
  margin-left: 9px;
}
.rural { background: #001765; }
.city { background: #6c91ec; }
.split {
  width: 279px;
  height: 19px;
  margin: 23px 0 0 65px;
  display: flex;
  text-align: center;
  font-size: 12px;
  line-height: 19px;
  font-weight: 600;
  color: #fff;
}
.multiples {
  margin-top: 21px;
  display: flex;
  gap: 20px;
}
.charts {
  padding-top: 14px;
  display: flex;
  flex-direction: column;
  gap: 7px;
}
.charts svg {
  stroke-width: 1.500px;
}
.charts rect {
  fill: #f4f6fa;
  stroke: none;
}
.charts text {
  fill: #252423;
  stroke: none;
  font-size: 9px;
  text-anchor: end;
}
.charts .name {
  fill: #43466a;
  font-size: 11px;
  font-weight: 600;
  text-anchor: start;
}
.charts .grid {
  stroke: #eceef3;
  stroke-width: 1px;
}
.area { fill: #cfdaf6; stroke: none; }
.area2 { fill: #a4b2dc; stroke: none; }
.urban-line { stroke: #4a78cf; }
.rural-line { stroke: #001255; stroke-width: 2px; }
.x-end {
  text-align: right;
  font-size: 11px;
  line-height: 16px;
}
.scrollbar {
  width: 9px;
  height: 487px;
  background: #d6d6d6;
}

/* Data pane */
.data-pane {
  width: 264px;
  padding: 0 7px 0 6px;
  background: #f3f2f1;
}
.data-pane header {
  display: flex;
  align-items: center;
  gap: 13px;
  height: 55px;
  padding: 0 6px 0 6px;
}
.data-pane header svg {
  stroke-width: 1.500px;
}
.data-pane h2 {
  flex: 1;
  font-size: 21px;
  font-weight: 600;
}
.pane-search {
  height: 38px;
  margin-top: 10px;
  padding-left: 11px;
  display: flex;
  align-items: center;
  gap: 8px;
  border: 1px solid #605e5c;
  border-radius: 3px;
}
.pane-search svg {
  stroke-width: 1.200px;
}
.pane-search input {
  width: 100%;
  font-size: 19px;
}
.pane-search input::placeholder {
  color: #484644;
  opacity: 1;
}
.tables {
  list-style: none;
  margin-top: 14px;
}
.tables li {
  position: relative;
  height: 35px;
  display: flex;
  align-items: center;
  padding-left: 17px;
  white-space: nowrap;
}
.tables svg {
  stroke-width: 1.400px;
}
.tables svg + svg {
  margin-left: 9px;
}
.tables span {
  position: absolute;
  left: 63px;
}
.used::after {
  content: "✓";
  position: absolute;
  left: 45px;
  top: 17px;
  width: 17px;
  height: 17px;
  border-radius: 50%;
  background: #117865;
  color: #fff;
  font: 700 12px/17px "DejaVu Sans", sans-serif;
  text-align: center;
}
.pane-rail {
  width: 43px;
  background: #faf9f8;
}
.pane-rail button {
  display: grid;
  place-items: center;
  width: 43px;
  height: 46px;
  padding-left: 4px;
}
.pane-rail svg {
  stroke-width: 1.500px;
}
.pane-rail .rail-on {
  height: 47px;
  margin-bottom: 1px;
  background: #e1dfdd;
  border: 1px solid #8a8886;
}
```
